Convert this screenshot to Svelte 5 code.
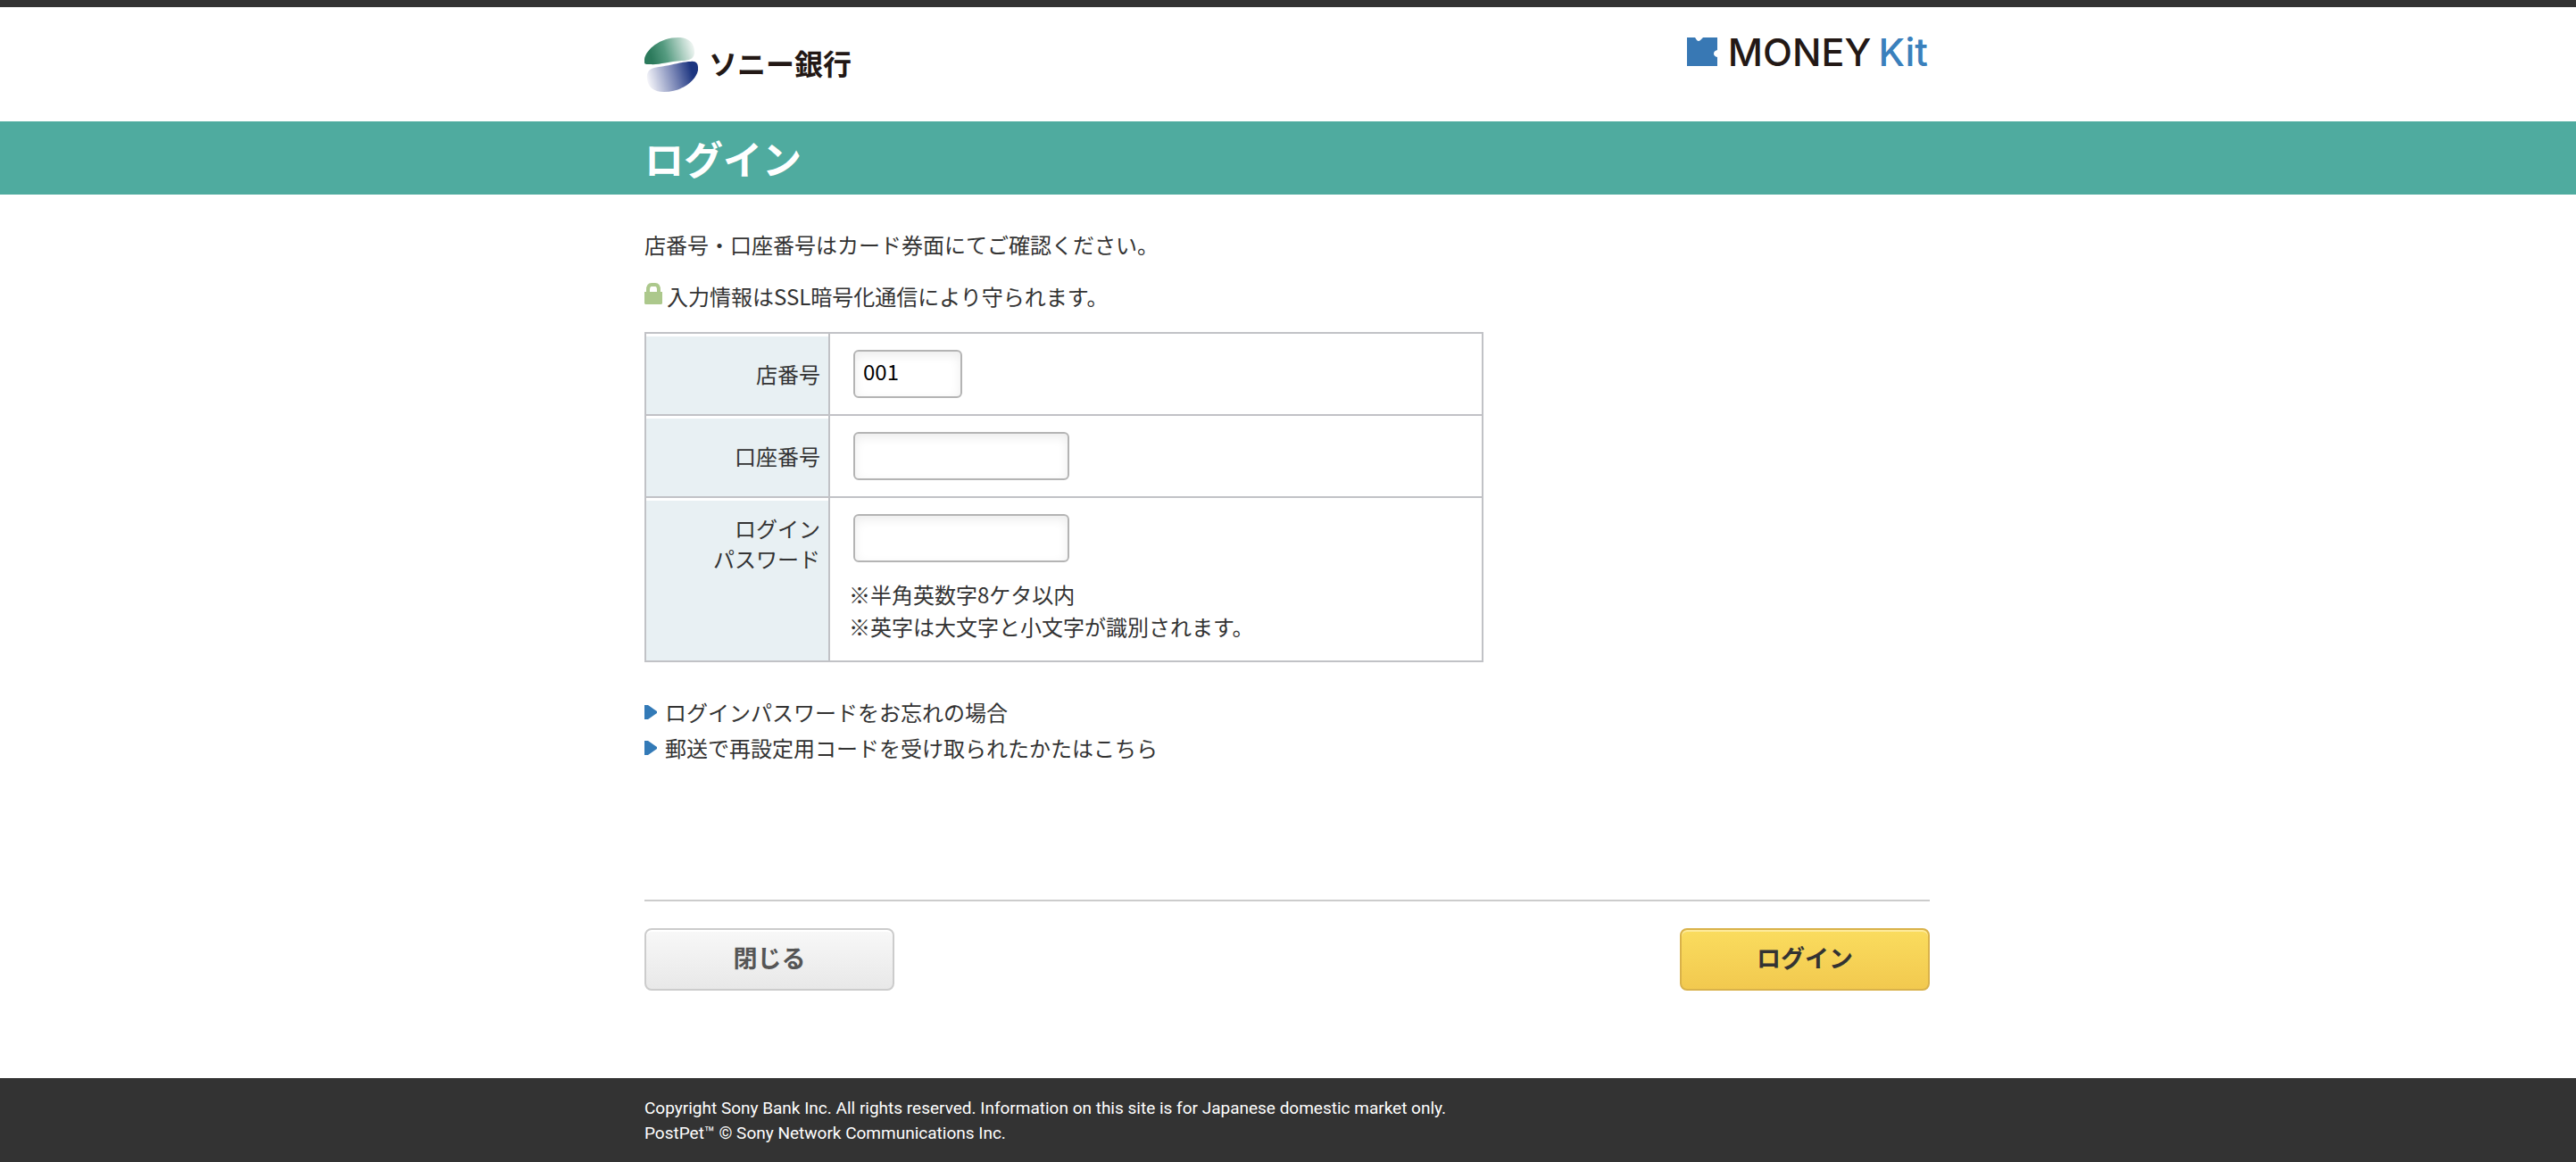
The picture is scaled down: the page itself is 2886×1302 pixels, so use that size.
<script>
  let branch = $state('001');
  let account = $state('');
  let password = $state('');
</script>

<div class="page">
  <header>
    <div class="wrap head">
      <a class="bank" href="#top">
        <svg class="globe" viewBox="0 0 60 61" aria-hidden="true">
          <defs>
            <linearGradient id="green" x1="0" y1="0.5" x2="1" y2="0.35">
              <stop offset="0.1" stop-color="#2c7a5c" />
              <stop offset="0.4" stop-color="#559b80" />
              <stop offset="1" stop-color="#f4f8f6" />
            </linearGradient>
            <linearGradient id="blue" x1="0" y1="0.6" x2="1" y2="0.45">
              <stop offset="0" stop-color="#f6f6fa" />
              <stop offset="0.55" stop-color="#7683b4" />
              <stop offset="0.9" stop-color="#1c3580" />
            </linearGradient>
          </defs>
          <path fill="url(#green)" d="M0 28C-2 17 15 0 38 0C50 0 57 7 56 18C55 24 50 26 42 26C26 27 16 31 6 30C2 30 0 30 0 28Z" />
          <path fill="url(#blue)" d="M60 33C62 44 45 61 22 61C9 61 2 54 3 42C4 36 8 34 16 33C32 31 42 27 52 27C58 26 60 30 60 33Z" />
        </svg>
        <span class="bank-name">ソニー銀行</span>
      </a>
      <a class="kit" href="#moneykit">
        <svg class="piece" viewBox="0 0 34 32" aria-hidden="true">
          <path fill="#3878b4" d="M0 0H9L11 3Q13 5 15 3L18 0H34V14Q30 15 30 18Q30 21 34 22V32H0Z" />
        </svg>
        <span class="kit-name">MONEY</span>
        <span class="kit-name blue">Kit</span>
      </a>
    </div>
  </header>

  <div class="title">
    <h1 class="wrap">ログイン</h1>
  </div>

  <main class="wrap">
    <p>店番号・口座番号はカード券面にてご確認ください。</p>
    <p class="secure">
      <svg class="lock" viewBox="0 0 20 24" aria-hidden="true">
        <path fill="none" stroke="#acc88c" stroke-width="4" d="M4 10V8Q4 2 8 2H12Q16 2 16 8V10" />
        <path fill="#acc88c" d="M0 10H20V23L19 24H1L0 23Z" />
      </svg>
      入力情報はSSL暗号化通信により守られます。
    </p>

    <form onsubmit={(e) => e.preventDefault()}>
      <table>
        <tbody>
          <tr>
            <th scope="row"><label for="branch">店番号</label></th>
            <td><input id="branch" class="short" type="text" bind:value={branch} /></td>
          </tr>
          <tr>
            <th scope="row"><label for="account">口座番号</label></th>
            <td><input id="account" type="text" bind:value={account} /></td>
          </tr>
          <tr class="tall">
            <th scope="row"><label for="password">ログイン<br />パスワード</label></th>
            <td>
              <input id="password" type="password" bind:value={password} />
              <div class="notes">
                ※半角英数字8ケタ以内<br />
                ※英字は大文字と小文字が識別されます。
              </div>
            </td>
          </tr>
        </tbody>
      </table>

      <ul>
        <li>
          <svg viewBox="0 0 14 16" aria-hidden="true"><path d="M0 0H4L14 7V9L4 16H0Z" /></svg>
          <a href="#forgot">ログインパスワードをお忘れの場合</a>
        </li>
        <li>
          <svg viewBox="0 0 14 16" aria-hidden="true"><path d="M0 0H4L14 7V9L4 16H0Z" /></svg>
          <a href="#reset">郵送で再設定用コードを受け取られたかたはこちら</a>
        </li>
      </ul>

      <div class="actions">
        <button type="button" class="close">閉じる</button>
        <button type="submit" class="login">ログイン</button>
      </div>
    </form>
  </main>

  <footer>
    <div class="wrap">
      Copyright Sony Bank Inc. All rights reserved. Information on this site is for Japanese domestic market only.<br />
      PostPet™ © Sony Network Communications Inc.
    </div>
  </footer>
</div>

<style>
  :global(body) {
    background: #fff;
  }
  .page {
    display: flex;
    flex-direction: column;
    min-height: 100vh;
    box-sizing: border-box;
    border-top: 8px solid #333;
    color: #333;
    font: 24px/36px "Noto Sans CJK JP", sans-serif;
  }
  .wrap {
    box-sizing: border-box;
    width: 100%;
    max-width: 1442px;
    margin: 0 auto;
    padding-right: 2px;
  }
  a {
    color: inherit;
    text-decoration: none;
  }
  .head {
    display: flex;
    justify-content: space-between;
    align-items: flex-start;
    height: 128px;
    padding-top: 34px;
  }
  .bank,
  .kit {
    display: flex;
    align-items: center;
  }
  .bank {
    gap: 12px;
    color: #231815;
  }
  .globe {
    width: 60px;
    height: 61px;
  }
  .bank-name {
    padding-bottom: 6px;
    font-size: 32px;
    font-weight: 700;
  }
  .kit {
    gap: 8px;
    height: 32px;
    padding-right: 2px;
    color: #231815;
  }
  .piece {
    width: 34px;
    height: 32px;
    margin-right: 4px;
  }
  .kit-name {
    font: 500 43px/32px Inter, sans-serif;
  }
  .blue {
    color: #3a80bc;
  }
  .title {
    background: #4fab9f;
    color: #fff;
  }
  h1 {
    font-size: 44px;
    line-height: 82px;
    font-weight: 700;
  }
  main {
    flex: 1;
    padding-top: 38px;
    padding-bottom: 98px;
  }
  p {
    margin: 0 0 22px;
  }
  .secure {
    display: flex;
    align-items: center;
    gap: 5px;
  }
  .lock {
    width: 20px;
    height: 24px;
    margin-bottom: 6px;
  }
  table {
    width: 940px;
    max-width: 100%;
    border-collapse: collapse;
  }
  th,
  td {
    box-sizing: border-box;
    height: 92px;
    border: 2px solid #c1c2c6;
  }
  th {
    width: 206px;
    padding: 0 9px 0 0;
    background: #e8f0f3;
    box-shadow: inset 0 3px #fff;
    font-weight: 400;
    line-height: 34px;
    text-align: right;
  }
  td {
    padding: 0 21px;
  }
  .tall th,
  .tall td {
    height: 184px;
    padding-top: 18px;
    vertical-align: top;
  }
  .tall th {
    padding-top: 17px;
  }
  input {
    display: block;
    box-sizing: border-box;
    width: 242px;
    height: 54px;
    margin-left: 5px;
    padding: 0 9px 8px;
    border: 2px solid #b4b4b4;
    border-radius: 6px;
    background: #fff;
    box-shadow: inset 0 4px 12px #ececec;
    color: #000;
    font: 24px "Noto Sans CJK JP", sans-serif;
  }
  input.short {
    width: 122px;
  }
  .notes {
    margin-top: 18px;
  }
  ul {
    margin: 36px 0 150px;
    padding: 0;
    list-style: none;
  }
  li {
    display: flex;
    align-items: center;
    gap: 9px;
    height: 40px;
  }
  li svg {
    width: 14px;
    height: 16px;
    fill: #337ab7;
  }
  .actions {
    display: flex;
    justify-content: space-between;
    padding-top: 30px;
    border-top: 2px solid #ccc;
  }
  button {
    box-sizing: border-box;
    width: 280px;
    height: 70px;
    padding: 0 0 6px;
    border-radius: 8px;
    font: 700 27px "Noto Sans CJK JP", sans-serif;
  }
  .close {
    border: 2px solid #ccc;
    background: linear-gradient(#f8f8f8, #e8e8e8);
    box-shadow: inset 0 2px #fff;
    color: #555;
  }
  .login {
    border: 2px solid #d9b24a;
    background: linear-gradient(#fadc5e, #f2c94f);
    box-shadow: inset 0 2px #fdea9a;
    color: #333;
  }
  footer {
    padding: 20px 0 18px;
    background: #333;
    color: #fff;
    font: 19px/28px Roboto, sans-serif;
  }
</style>
